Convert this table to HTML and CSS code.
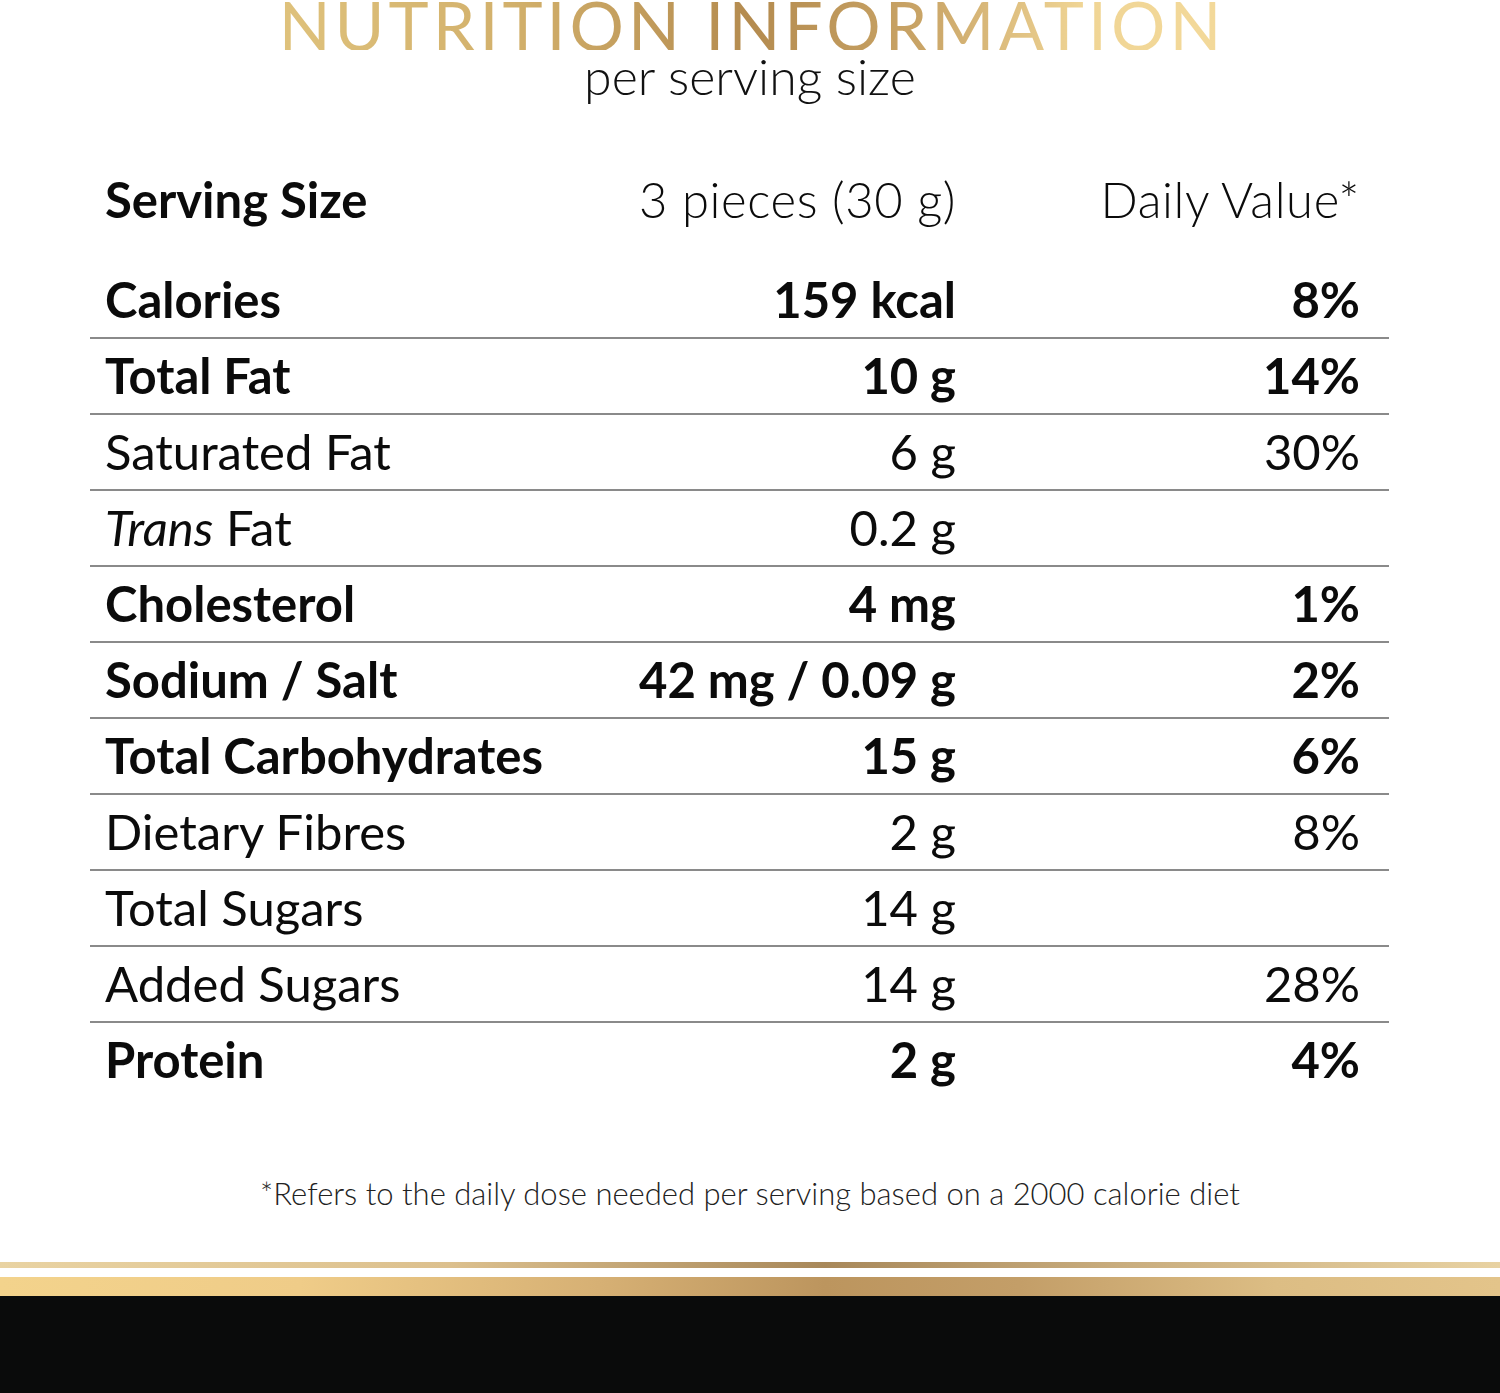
FILE: index.html
```html
<!DOCTYPE html>
<html>
<head>
<meta charset="utf-8">
<link rel="stylesheet" href="styles.css">
</head>
<body>
<div class="page">
  <header class="head">
    <h1 class="title">NUTRITION INFORMATION</h1>
    <p class="subtitle">per serving size</p>
  </header>

  <section class="table">
    <div class="row first">
      <span class="label strong">Serving Size</span>
      <span class="val">3 pieces (30 g)</span>
      <span class="dv">Daily Value*</span>
    </div>
    <div class="row line b">
      <span class="label">Calories</span><span class="val">159 kcal</span><span class="dv">8%</span>
    </div>
    <div class="row line b">
      <span class="label">Total Fat</span><span class="val">10 g</span><span class="dv">14%</span>
    </div>
    <div class="row line">
      <span class="label">Saturated Fat</span><span class="val">6 g</span><span class="dv">30%</span>
    </div>
    <div class="row line">
      <span class="label"><i>Trans</i> Fat</span><span class="val">0.2 g</span><span class="dv"></span>
    </div>
    <div class="row line b">
      <span class="label">Cholesterol</span><span class="val">4 mg</span><span class="dv">1%</span>
    </div>
    <div class="row line b">
      <span class="label">Sodium / Salt</span><span class="val">42 mg / 0.09 g</span><span class="dv">2%</span>
    </div>
    <div class="row line b">
      <span class="label">Total Carbohydrates</span><span class="val">15 g</span><span class="dv">6%</span>
    </div>
    <div class="row line">
      <span class="label">Dietary Fibres</span><span class="val">2 g</span><span class="dv">8%</span>
    </div>
    <div class="row line">
      <span class="label">Total Sugars</span><span class="val">14 g</span><span class="dv"></span>
    </div>
    <div class="row line">
      <span class="label">Added Sugars</span><span class="val">14 g</span><span class="dv">28%</span>
    </div>
    <div class="row last b">
      <span class="label">Protein</span><span class="val">2 g</span><span class="dv">4%</span>
    </div>
  </section>

  <p class="note">*Refers to the daily dose needed per serving based on a 2000 calorie diet</p>

  <footer class="foot">
    <div class="thin"></div>
    <div class="thick"></div>
    <div class="black"></div>
  </footer>
</div>
</body>
</html>
```
FILE: styles.css
```css
html, body {
  margin: 0;
  padding: 0;
  background: #ffffff;
}
body {
  font-family: "Lato", "Open Sans", sans-serif;
  color: #0b0b0b;
}
.page {
  width: 1500px;
  height: 1393px;
  display: flex;
  flex-direction: column;
  overflow: hidden;
}
.head {
  display: flex;
  flex-direction: column;
  align-items: center;
}
.title {
  margin: 0;
  font-size: 68px;
  font-weight: 400;
  line-height: 50px;
  letter-spacing: 4px;
  padding-left: 4px;
  white-space: nowrap;
  background: linear-gradient(90deg, #dfc27c 0%, #d2b06b 25%, #b48b4f 50%, #c9a466 68%, #f0d595 85%, #f3d99a 100%);
  -webkit-background-clip: text;
  background-clip: text;
  color: transparent;
}
.subtitle {
  margin: 2px 0 0 0;
  font-size: 50px;
  font-weight: 300;
  line-height: 48px;
  color: #111;
}
.table {
  margin: 63px 111px 0 90px;
  display: flex;
  flex-direction: column;
}
.row {
  display: grid;
  grid-template-columns: 451px 400px 404px;
  padding: 0 29px 9px 15px;
  height: 76px;
  align-items: end;
  font-size: 49px;
  line-height: 58px;
  box-sizing: border-box;
}
.row.first {
  height: 100px;
  padding-bottom: 35px;
  font-weight: 300;
  letter-spacing: 0.6px;
}
.row.first .strong {
  font-weight: 700;
  letter-spacing: 0;
}
.row.line {
  border-bottom: 2px solid #8a8a8a;
}
.row.last {
  padding-bottom: 11px;
}
.row.b {
  font-weight: 700;
}
.label {
  white-space: nowrap;
}
.label i {
  font-style: italic;
}
.val, .dv {
  text-align: right;
  white-space: nowrap;
}
.note {
  margin: 74px 0 0 0;
  text-align: center;
  font-size: 31px;
  line-height: 40px;
  font-weight: 300;
  color: #222;
}
.foot {
  margin-top: auto;
  display: flex;
  flex-direction: column;
}
.thin {
  height: 6px;
  background: linear-gradient(90deg, #e9d3a2 0%, #dcc08e 30%, #a8885a 55%, #c9ad7e 75%, #e8d2a2 100%);
}
.thick {
  margin-top: 9px;
  height: 19px;
  background: linear-gradient(90deg, #f3d38c 0%, #efcc88 20%, #d6b074 40%, #bc955e 55%, #c39e68 68%, #dcbd84 85%, #e3c48a 100%);
}
.black {
  height: 97px;
  background: #0a0b0b;
}
```
